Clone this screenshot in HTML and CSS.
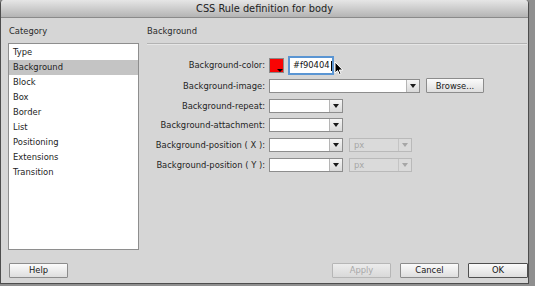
FILE: index.html
```html
<!DOCTYPE html>
<html lang="en">

<head>
  <meta charset="UTF-8">
  <meta name="viewport" content="width=device-width, initial-scale=1.0">
  <title>CSS Rule definition for body</title>
  <link rel="stylesheet" href="styles.css">
</head>

<body>
  <div class="dialog">
    <div class="titlebar">CSS Rule definition for body</div>

    <div class="content">
      <!-- category list -->
      <div class="sidebar">
        <div class="caption">Category</div>
        <ul class="cat-list">
          <li>Type</li>
          <li class="selected">Background</li>
          <li>Block</li>
          <li>Box</li>
          <li>Border</li>
          <li>List</li>
          <li>Positioning</li>
          <li>Extensions</li>
          <li>Transition</li>
        </ul>
      </div>

      <!-- background panel -->
      <div class="panel">
        <div class="caption">Background</div>
        <div class="rule"></div>

        <div class="form">
          <label>Background-color:</label>
          <div class="controls">
            <span class="swatch"></span>
            <span class="text-field focus">#f90404<b class="caret"></b></span>
            <svg class="pointer" width="10" height="15" viewBox="0 0 10 15">
              <path d="M1 1 L1 12 L3.6 9.6 L5.4 13.6 L7 12.9 L5.3 9 L8.8 9 Z" fill="#000" stroke="#fff" stroke-width="1" />
            </svg>
          </div>

          <label>Background-image:</label>
          <div class="controls">
            <span class="select wide"><span class="value"></span><span class="arrow"></span></span>
            <button class="btn browse">Browse...</button>
          </div>

          <label>Background-repeat:</label>
          <div class="controls">
            <span class="select"><span class="value"></span><span class="arrow"></span></span>
          </div>

          <label>Background-attachment:</label>
          <div class="controls">
            <span class="select"><span class="value"></span><span class="arrow"></span></span>
          </div>

          <label>Background-position ( X ):</label>
          <div class="controls">
            <span class="select"><span class="value"></span><span class="arrow"></span></span>
            <span class="select unit disabled"><span class="value">px</span><span class="arrow"></span></span>
          </div>

          <label>Background-position ( Y ):</label>
          <div class="controls">
            <span class="select"><span class="value"></span><span class="arrow"></span></span>
            <span class="select unit disabled"><span class="value">px</span><span class="arrow"></span></span>
          </div>
        </div>
      </div>
    </div>

    <div class="footer">
      <button class="btn help">Help</button>
      <div class="actions">
        <button class="btn" disabled>Apply</button>
        <button class="btn">Cancel</button>
        <button class="btn default">OK</button>
      </div>
    </div>
  </div>
</body>

</html>
```

FILE: styles.css
```css
* {
  padding: 0;
  margin: 0;
  box-sizing: border-box;
}

body {
  width: 535px;
  height: 286px;
  overflow: hidden;
  background: #8f8f8f;
  font: 8.4px/1.2 "DejaVu Sans", sans-serif;
  color: #1c1c1c;
}

.dialog {
  width: 529px;
  height: 284px;
  display: flex;
  flex-direction: column;
  background: #d6d6d6;
  border: 1px solid #4d4d4d;
  border-top: 0;
  border-radius: 4px 4px 0 0;
  overflow: hidden;
}

.titlebar {
  height: 18px;
  line-height: 17px;
  text-align: center;
  font-size: 9.8px;
  color: #222;
  background: linear-gradient(#e6e6e6, #c3c3c3 70%, #b4b4b4);
  border-bottom: 1px solid #8a8a8a;
}

.content {
  flex: 1;
  display: flex;
  padding: 6px 0 0 7px;
}

.caption {
  height: 14px;
  line-height: 14px;
  color: #2a2a2a;
}

/* left column */
.sidebar {
  width: 131px;
}

.sidebar .caption {
  padding-left: 1px;
  margin-bottom: 5px;
}

.cat-list {
  list-style: none;
  height: 207px;
  padding-top: 1px;
  background: #fff;
  border: 1px solid #8e8e8e;
}

.cat-list li {
  height: 15px;
  line-height: 15px;
  padding-left: 4px;
  color: #1c1c1c;
}

.cat-list li.selected {
  background: #c4c4c4;
}

/* right column */
.panel {
  flex: 1;
  margin-left: 8px;
  padding-right: 1px;
}

.rule {
  height: 2px;
  margin-top: 5px;
  border-top: 1px solid #b3b3b3;
  border-bottom: 1px solid #e6e6e6;
}

.form {
  display: grid;
  grid-template-columns: 118px auto;
  grid-template-rows: 21px repeat(5, 19.8px);
  column-gap: 4px;
  align-items: center;
  margin-top: 10px;
}

.form label {
  text-align: right;
  color: #1e1e1e;
}

.controls {
  display: flex;
  align-items: center;
  gap: 6px;
}

.swatch {
  position: relative;
  width: 15px;
  height: 15px;
  background: #f90404;
  border: 1px solid #8a8a8a;
  margin-right: -2px;
}

.swatch::after {
  content: "";
  position: absolute;
  right: 0;
  bottom: 0;
  width: 0;
  height: 0;
  border-left: 3px solid transparent;
  border-right: 3px solid transparent;
  border-top: 3px solid #000;
}

.text-field {
  display: flex;
  align-items: center;
  width: 46px;
  height: 19px;
  padding-left: 3px;
  background: #fff;
  border: 1px solid #8a8a8a;
  color: #111;
}

.text-field.focus {
  border: 2px solid #5a95d3;
}

.caret {
  width: 1px;
  height: 10px;
  margin-left: 1px;
  background: #000;
}

.pointer {
  margin-left: -6px;
  margin-top: 6px;
}

.select {
  display: flex;
  width: 74px;
  height: 14px;
  background: #fff;
  border: 1px solid #8d8d8d;
}

.select.wide {
  width: 151px;
}

.select.unit {
  width: 63px;
}

.select .value {
  flex: 1;
  padding-left: 4px;
  line-height: 12px;
}

.select .arrow {
  position: relative;
  width: 13px;
  border-left: 1px solid #b5b5b5;
  background: linear-gradient(#f6f6f6, #d9d9d9);
}

.select .arrow::after {
  content: "";
  position: absolute;
  left: 3px;
  top: 4px;
  border-left: 3px solid transparent;
  border-right: 3px solid transparent;
  border-top: 4px solid #1a1a1a;
}

.select.disabled {
  background: #dadada;
  border-color: #b9b9b9;
  color: #a6a6a6;
}

.select.disabled .arrow {
  background: #dadada;
  border-left-color: #c4c4c4;
}

.select.disabled .arrow::after {
  border-top-color: #a6a6a6;
}

.btn {
  height: 15px;
  width: 59px;
  font: inherit;
  color: #161616;
  background: linear-gradient(#fbfbfb, #dedede);
  border: 1px solid #8c8c8c;
  border-radius: 1px;
}

.btn.browse {
  width: 58px;
}

.btn:disabled {
  color: #a8a8a8;
  border-color: #b6b6b6;
  background: linear-gradient(#ececec, #d9d9d9);
}

.btn.default {
  width: 60px;
  border-color: #4f4f4f;
}

.footer {
  display: flex;
  justify-content: space-between;
  height: 15px;
  margin: 0 0 5px 8px;
}

.actions {
  display: flex;
  gap: 9px;
}
```
